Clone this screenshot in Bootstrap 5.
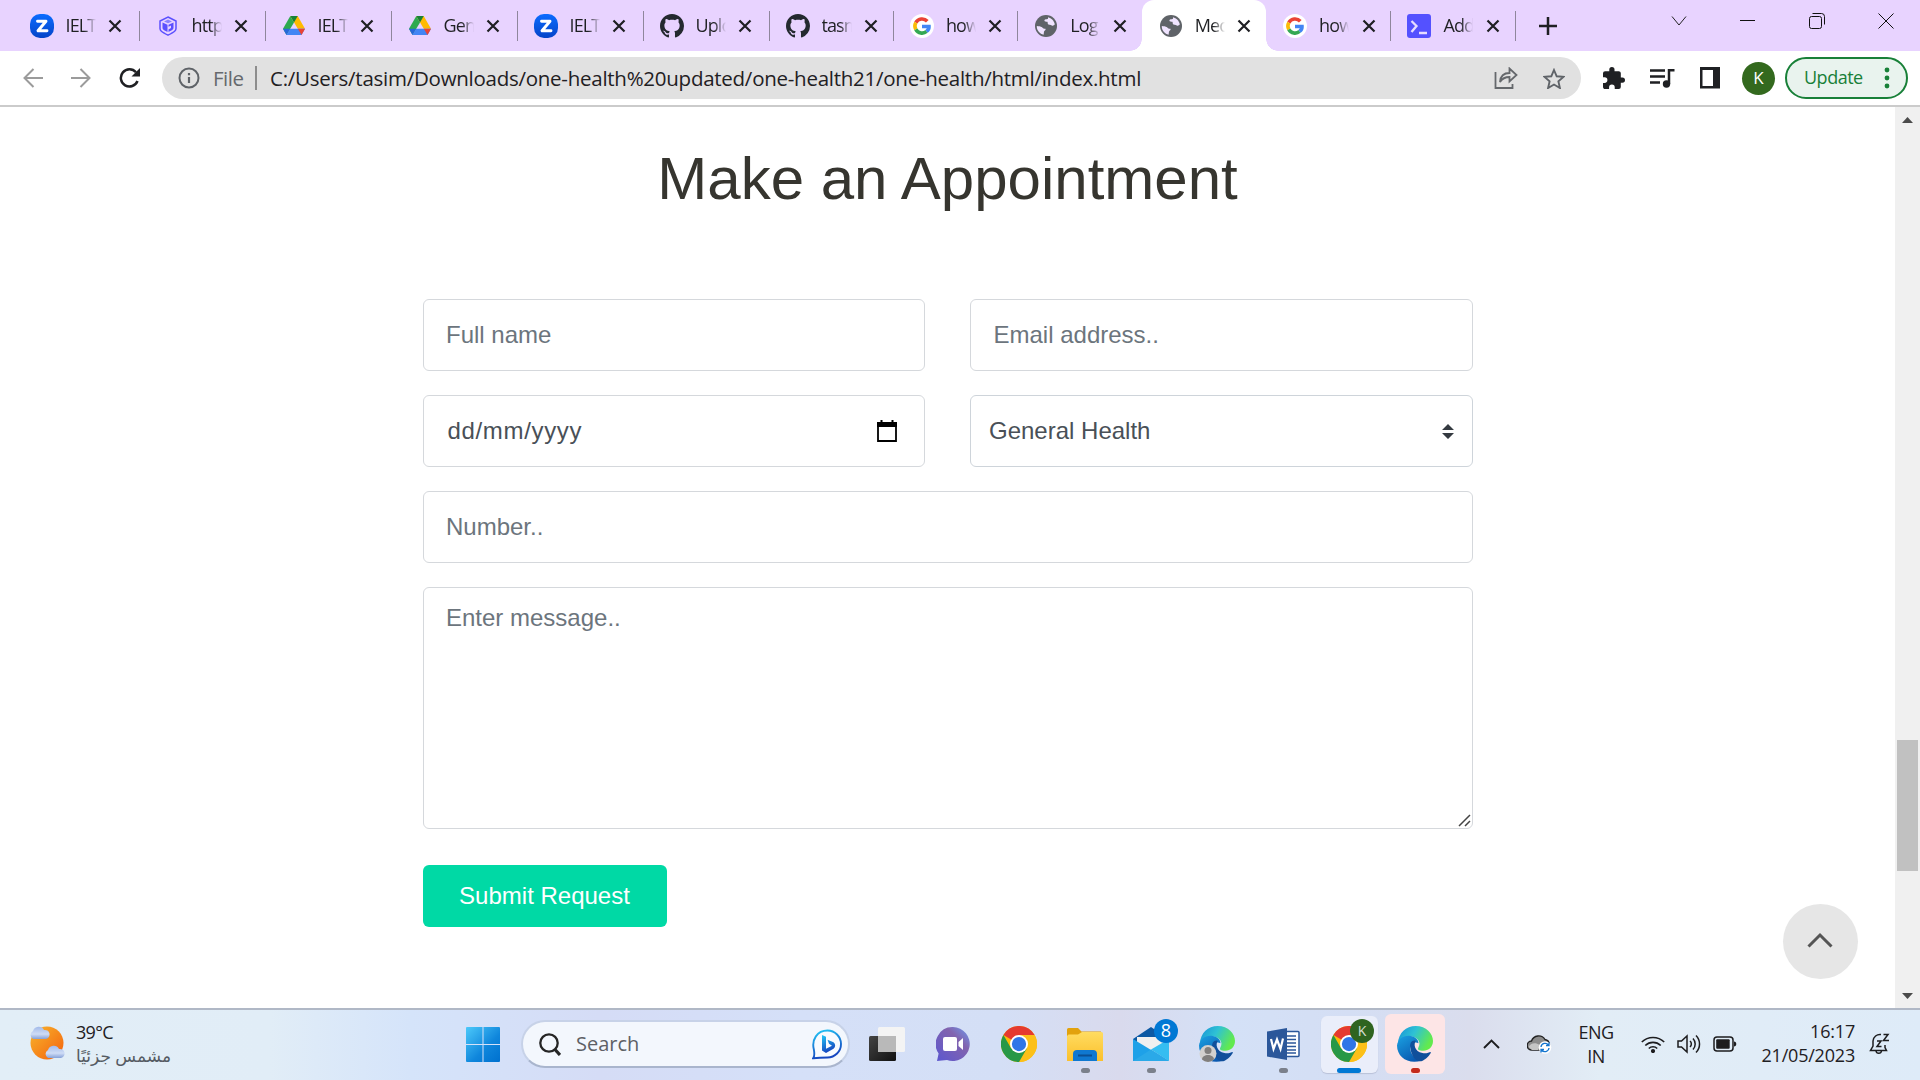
<!DOCTYPE html>
<html lang="en">
<head>
<meta charset="utf-8">
<title>Medical - Make an Appointment</title>
<link href="https://cdn.jsdelivr.net/npm/bootstrap@5.3.0/dist/css/bootstrap.min.css" rel="stylesheet">
<style>
body{width:1920px;height:1080px;overflow:hidden;font-family:"Open Sans","Noto Sans","DejaVu Sans",sans-serif;color:#1f2023;background:#fff;line-height:1.2}
svg{display:block;flex:none}
.tabstrip{height:51px;background:#e8d3ff;padding-left:12.5px}
.tab{width:126px;height:51px;padding-left:17px;position:relative}
.tab.narrow{width:124.4px}
.tab::after{content:"";position:absolute;right:-1px;top:11px;width:1px;height:30px;background:#8f869c}
.tab.plain::after{display:none}
.tab-title{width:30px;margin-left:12px;font-size:18px;letter-spacing:-.9px;white-space:nowrap;overflow:hidden;-webkit-mask-image:linear-gradient(90deg,#000 60%,transparent);mask-image:linear-gradient(90deg,#000 60%,transparent)}
.tab-x{margin-left:12.500px}
.tab.current{background:#fff;border-radius:12px 12px 0 0}
.flare{position:absolute;bottom:0;width:12px;height:12px}
.flare-l{left:-12px;background:radial-gradient(circle at 0 0,transparent 11.5px,#fff 12px)}
.flare-r{right:-12px;background:radial-gradient(circle at 100% 0,transparent 11.5px,#fff 12px)}
.winbtn{width:69px;height:42px}
.toolbar{height:56px;border-bottom:2px solid #cbcbcb;background:#fff}
.navslot{width:48px}
.omni{width:1419px;height:42px;border-radius:21px;background:#e1e1e1;padding-left:16px;font-size:20.5px}
.omni-file{color:#66696d;margin-left:13px;width:42px;letter-spacing:-.5px}
.omni-div{width:2px;height:24px;background:#8d8d8d;margin-right:13px}
.omni-url{white-space:nowrap;letter-spacing:-.26px;padding-top:1px}
.avatar{width:33px;height:33px;background:#33691e;color:#fff;font-size:17px}
.update{width:123px;height:42px;border:2px solid #188038;border-radius:21px;background:#e9f3ee;color:#188038;font-size:18px;padding-left:17px}
.update-label{width:60px;letter-spacing:-.5px}
.viewport{height:901px;font-family:"Liberation Sans",Arial,sans-serif}
.pagearea{width:1895px;height:901px;position:relative}
.scroller{width:25px;background:#f0f0f0}
.thumb{width:21px;height:131px;background:#c1c1c1;margin:609px 2px 0}
.headline{font-size:60px;line-height:72px;color:#36352f;padding-top:36px;margin-bottom:84px}
.appt{width:1050px;margin:0 auto;font-size:24px}
.appt-grid{--bs-gutter-x:45px;--bs-gutter-y:24px}
.field,.form-select.field{height:72px;font-size:24px;line-height:36px;padding:17px 22px 17px 22.5px;border:1px solid #d5d8dc;border-radius:6px;color:#495057;background-color:#fff}
.field::placeholder{color:#6c757d;opacity:1}
.form-select.field{padding-left:18px;border-color:#ced4da;background-image:url("data:image/svg+xml,%3csvg xmlns='http://www.w3.org/2000/svg' viewBox='0 0 4 5'%3e%3cpath fill='%23343a40' d='M2 0L0 2h4zm0 5L0 3h4z'/%3e%3c/svg%3e");background-size:12px 15px;background-position:right 18px center}
.datefield.field{padding-left:24px;padding-right:27px;letter-spacing:.66px}
textarea.field{height:242px;resize:none;padding-top:12px}
.grip{position:absolute;right:2px;bottom:2px}
.submit{height:62px;width:244px;margin-top:36px;background:#00d9a5;border:0;border-radius:6px;color:#fff;font-size:24px;padding:0}
.totop{position:absolute;left:1783px;top:797px;width:75px;height:75px;background:#e6e6e6;border:0;padding:0 1px 3px 0}
.taskbar{height:72px;border-top:2px solid #b0b8c6;background:linear-gradient(90deg,#e2eef7 0,#e1edf7 270px,#d5e4fa 410px,#d5dcf6 600px,#d5e0f8 800px,#d4dff6 1000px,#d9daed 1120px,#d4e1f7 1230px,#d4def4 1350px,#dadded 1470px,#e2edf6 1600px,#deebf8 1920px);padding-bottom:2px}
.weather{width:466px;padding-left:28px}
.weather-text{margin-left:10px;font-size:18px;line-height:24px;letter-spacing:-.7px;padding-bottom:1px}
.weather-text div+div{color:#555b63;font-size:17px;letter-spacing:0}
.searchbox{width:329px;height:48px;margin:0 4px 0 21px;border:2px solid #c7d2e8;border-bottom-color:#a9b5cd;border-radius:24px;background:#f3f7fd;padding:0 5px 0 16px;font-size:20px;color:#5d6065}
.slot{width:66px;height:70px;position:relative}
.dot{position:absolute;bottom:6px;height:5px;width:9px;border-radius:3px;background:#7b808b}
.tile{width:57px;height:57px;border-radius:6px;background:#eaeefa;box-shadow:0 1px 1px #b9c1d8}
.tile.alert-tile{width:60px;height:60px;background:#fde5e6;box-shadow:none}
.count{position:absolute;background:#0078d4;color:#fff;width:24px;height:24px;font-size:18px;left:36px;top:10px}
.kbadge{position:absolute;background:#2f6420;color:#d6dfd3;width:24px;height:24px;font-size:14px;left:34px;top:10px}
.tray{font-size:18px;line-height:24px;letter-spacing:-.55px}
</style>
<script src="https://cdn.jsdelivr.net/npm/bootstrap@5.3.0/dist/js/bootstrap.bundle.min.js"></script>
</head>
<body>
<svg width="0" height="0" class="position-absolute">
<defs>
<linearGradient id="gz" x2="0" y2="1"><stop stop-color="#0b6cff"/><stop offset="1" stop-color="#0544c8"/></linearGradient>
<linearGradient id="gsun" x2="1" y2="1"><stop stop-color="#f8b62d"/><stop offset="1" stop-color="#f4600c"/></linearGradient>
<linearGradient id="gcl" x2="0" y2="1"><stop stop-color="#a3bbea"/><stop offset=".6" stop-color="#cfdcf6"/><stop offset="1" stop-color="#86a1d8"/></linearGradient>
<linearGradient id="gwin" x1="0" y1="0" x2="34" y2="34" gradientUnits="userSpaceOnUse"><stop stop-color="#4cc9fa"/><stop offset=".6" stop-color="#0f86dc"/><stop offset="1" stop-color="#0071cf"/></linearGradient>
<linearGradient id="gtm" x1="1" x2="0" y2="1"><stop stop-color="#6d9cf0"/><stop offset=".35" stop-color="#8263ae"/><stop offset="1" stop-color="#5b57d0"/></linearGradient>
<linearGradient id="gfo" x2="0" y2="1"><stop stop-color="#ffdc61"/><stop offset="1" stop-color="#fbc02c"/></linearGradient>
<linearGradient id="ge1" x1="0" x2="1" y2=".4"><stop stop-color="#158fd8"/><stop offset=".5" stop-color="#2fc2d4"/><stop offset="1" stop-color="#62ea4e"/></linearGradient>
<linearGradient id="ge2" x2=".6" y2="1"><stop stop-color="#1aa1e2"/><stop offset="1" stop-color="#0a59b0"/></linearGradient>
<linearGradient id="gbing" x2=".3" y2="1"><stop stop-color="#21c8f6"/><stop offset="1" stop-color="#1546c0"/></linearGradient>
<linearGradient id="gblk" x2="1" y2="1"><stop stop-color="#444"/><stop offset="1" stop-color="#111"/></linearGradient>
<symbol id="zoomi" viewBox="0 0 24 24"><rect width="24" height="24" rx="10" fill="url(#gz)"/><path d="M7.500 7.200h8.500L8 16.800h9" fill="none" stroke="#fff" stroke-width="2.900" stroke-linejoin="round" stroke-linecap="round"/></symbol>
<symbol id="hex" viewBox="0 0 24 24"><path d="M12 3l8 4v7.500c0 2-1 3-8 6.700-7-3.700-8-4.700-8-6.700V7z" fill="none" stroke="#5b50ff" stroke-width="1.500"/><path d="M6.500 8.500l5 2.200V18c-4-2-5-2.700-5-4.500zM17.500 8.500V13.500c0 1.800-1 2.500-5 4.500v-2.500l2.500-1.400v-2.700l-2.500 1.300v-2z" fill="#5b50ff"/><path d="M8 7.500l4-2 4 2-4 1.700z" fill="#8a80ff"/></symbol>
<symbol id="drive" viewBox="0 0 24 24"><path d="M8.300 2L1 14.800 4.500 21 12 8.500z" fill="#2da94f"/><path d="M8.300 2h7.400L23 14.800h-7.200z" fill="#ffba00"/><path d="M8.300 2h7.400L12 8.500z" fill="#188038"/><path d="M4.500 21l3.600-6.200H23L19.500 21z" fill="#4285f4"/><path d="M15.800 14.800H23L19.500 21z" fill="#ea4335"/><path d="M1 14.800h7.100L4.500 21z" fill="#2767d9"/></symbol>
<symbol id="gh" viewBox="0 0 16 16"><path fill="#24292f" d="M8 0C3.580 0 0 3.580 0 8c0 3.540 2.290 6.530 5.470 7.590.4.070.55-.17.55-.38 0-.19-.01-.82-.01-1.490-2.010.37-2.530-.49-2.690-.94-.09-.23-.48-.94-.82-1.130-.28-.15-.68-.52-.01-.53.63-.01 1.080.58 1.230.82.720 1.210 1.870.87 2.330.66.070-.52.28-.87.51-1.070-1.780-.2-3.640-.89-3.640-3.950 0-.87.31-1.590.82-2.150-.08-.2-.36-1.020.08-2.120 0 0 .67-.21 2.200.82.64-.18 1.320-.27 2-.27s1.360.09 2 .27c1.530-1.040 2.200-.82 2.200-.82.440 1.100.160 1.920.080 2.120.51.560.82 1.270.82 2.150 0 3.070-1.870 3.750-3.650 3.950.290.250.540.730.540 1.480 0 1.070-.01 1.930-.01 2.200 0 .21.150.46.550.38A8.010 8.010 0 0 0 16 8c0-4.420-3.580-8-8-8z"/></symbol>
<symbol id="goog" viewBox="0 0 24 24"><circle cx="12" cy="12" r="12" fill="#fff"/><g fill="none" stroke-width="3.600"><path d="M17.300 7.300A7.100 7.100 0 0 0 5.800 8.600" stroke="#ea4335"/><path d="M5.800 8.600a7.100 7.100 0 0 0 0 6.800" stroke="#fbbc05"/><path d="M5.800 15.400a7.100 7.100 0 0 0 10.800 2" stroke="#34a853"/><path d="M16.600 17.400c1.700-1.400 2.500-3.300 2.400-4.900H12" stroke="#4285f4"/></g></symbol>
<symbol id="globe" viewBox="0 0 24 24"><circle cx="12" cy="12" r="11" fill="#5f6368"/><path d="M2.800 12c2 .3 3.700.2 5.300 1.300.8 1.500 1.800 1.300 3.400 1.500.5 1.500-.8 1.800-1.500 2.600l-.4 3.400C6 20 2.600 16.500 2.800 12zM14 3.300c3.500.8 6.200 3.700 6.800 7-1 1.500-2 1.700-3 1.200-1.500-.7-2.800-.2-3.800-1.400-.8-1.200.1-1.900-.7-2.300-1.300-.2-2.800.2-2.900-1.200.1-1.700 2.200-1 3.600-1.800z" fill="#f0e4ff"/></symbol>
<symbol id="term" viewBox="0 0 24 24"><rect width="24" height="24" rx="3" fill="#5451ff"/><path d="M4.500 7l5 5-5 6M12 19h8" fill="none" stroke="#e6dcff" stroke-width="2.300"/></symbol>
<symbol id="x" viewBox="0 0 14 14"><path d="M1.500 1.500l11 11m0-11l-11 11" stroke="#1f1f23" stroke-width="2.200"/></symbol>
<symbol id="chrome" viewBox="0 0 48 48"><circle cx="24" cy="24" r="24" fill="#fbbc05"/><path d="M24 24L3.200 12A24 24 0 0 1 44.800 12z" fill="#e53a30"/><path d="M24 12h20.800A24 24 0 0 1 24 48l10.400-18z" fill="#fcc018"/><path d="M3.200 12A24 24 0 0 0 24 48l10.400-18H13.600z" fill="#279847"/><circle cx="24" cy="24" r="12" fill="#fff"/><circle cx="24" cy="24" r="9.500" fill="#2f75e8"/></symbol>
<symbol id="edge" viewBox="0 0 48 48"><path d="M1 24C2 9 12 0 25 0c14 0 23 10 23 20 0 8-6 13-13 13-6 0-8-2-6.500-4.500C33 22 27 14 18 14 9 14 3 18 1 24z" fill="url(#ge1)"/><path d="M0 26C1 17 9 12 17 13c8 1 12 6 11.500 10C24 20 17 24 18 32c1 7 8 13 15 14C16 52 0 42 0 26z" fill="url(#ge2)"/><path d="M18 30c-2-8 3-12 7-10-3 4-2 14 9 16 5 1 9-1 10.500-1.500 1.500 0 0 3-3 6C36 46 33 47 30 47c-6-1-11-8-12-17z" fill="#104f9b"/></symbol>
</defs>
</svg>

<header>
<nav class="tabstrip d-flex align-items-center" aria-label="Tabs">
<div class="tab d-flex align-items-center"><svg width="24" height="24"><use href="#zoomi"/></svg><span class="tab-title">IELT</span><svg class="tab-x" width="14" height="14"><use href="#x"/></svg></div>
<div class="tab d-flex align-items-center"><svg width="24" height="24"><use href="#hex"/></svg><span class="tab-title">http</span><svg class="tab-x" width="14" height="14"><use href="#x"/></svg></div>
<div class="tab d-flex align-items-center"><svg width="24" height="24"><use href="#drive"/></svg><span class="tab-title">IELT</span><svg class="tab-x" width="14" height="14"><use href="#x"/></svg></div>
<div class="tab d-flex align-items-center"><svg width="24" height="24"><use href="#drive"/></svg><span class="tab-title">Gen</span><svg class="tab-x" width="14" height="14"><use href="#x"/></svg></div>
<div class="tab d-flex align-items-center"><svg width="24" height="24"><use href="#zoomi"/></svg><span class="tab-title">IELT</span><svg class="tab-x" width="14" height="14"><use href="#x"/></svg></div>
<div class="tab d-flex align-items-center"><svg width="24" height="24"><use href="#gh"/></svg><span class="tab-title">Uplo</span><svg class="tab-x" width="14" height="14"><use href="#x"/></svg></div>
<div class="tab narrow d-flex align-items-center"><svg width="24" height="24"><use href="#gh"/></svg><span class="tab-title">tasm</span><svg class="tab-x" width="14" height="14"><use href="#x"/></svg></div>
<div class="tab narrow d-flex align-items-center"><svg width="24" height="24"><use href="#goog"/></svg><span class="tab-title">how</span><svg class="tab-x" width="14" height="14"><use href="#x"/></svg></div>
<div class="tab narrow plain d-flex align-items-center"><svg width="24" height="24"><use href="#globe"/></svg><span class="tab-title">Log</span><svg class="tab-x" width="14" height="14"><use href="#x"/></svg></div>
<div class="tab narrow plain current d-flex align-items-center"><i class="flare flare-l"></i><svg width="24" height="24"><use href="#globe"/></svg><span class="tab-title">Med</span><svg class="tab-x" width="14" height="14"><use href="#x"/></svg><i class="flare flare-r"></i></div>
<div class="tab narrow d-flex align-items-center"><svg width="24" height="24"><use href="#goog"/></svg><span class="tab-title">how</span><svg class="tab-x" width="14" height="14"><use href="#x"/></svg></div>
<div class="tab narrow d-flex align-items-center"><svg width="24" height="24"><use href="#term"/></svg><span class="tab-title">Add</span><svg class="tab-x" width="14" height="14"><use href="#x"/></svg></div>
<div class="d-flex justify-content-center" style="width:67px"><svg width="18" height="18"><path d="M9 0v18M0 9h18" stroke="#1f1f23" stroke-width="2.500"/></svg></div>
<div class="d-flex align-self-start ms-auto">
<div class="winbtn d-flex align-items-center justify-content-center"><svg width="16" height="10"><path d="M1 .5l7 8.500 7-8.500" fill="none" stroke="#222"/></svg></div>
<div class="winbtn d-flex align-items-center justify-content-center"><svg width="15" height="2"><path d="M0 .5h15" stroke="#111"/></svg></div>
<div class="winbtn d-flex align-items-center justify-content-center"><svg width="16" height="16" fill="none" stroke="#111"><rect x=".5" y="3.500" width="12" height="12" rx="2"/><path d="M3.500.5h9a3 3 0 0 1 3 3v8"/></svg></div>
<div class="winbtn d-flex align-items-center justify-content-center"><svg width="16" height="16"><path d="M.5.5l15 15m0-15l-15 15" stroke="#111"/></svg></div>
</div>
</nav>

<div class="toolbar d-flex align-items-center">
<div class="d-flex" style="padding-left:9px;width:162px">
<div class="navslot d-flex justify-content-center"><svg width="20" height="20" fill="none" stroke="#9b9b9b" stroke-width="2"><path d="M20 10H2M10.500 1L1.500 10l9 9"/></svg></div>
<div class="navslot d-flex justify-content-center"><svg width="20" height="20" fill="none" stroke="#9b9b9b" stroke-width="2"><path d="M0 10h18M9.500 1l9 9-9 9"/></svg></div>
<div class="navslot d-flex justify-content-center"><svg width="22" height="20" viewBox="-1 0 22 20"><path d="M18.500 13A8.600 8.600 0 1 1 17 4.300" fill="none" stroke="#1f2023" stroke-width="2.500"/><path d="M21 0v8.500h-8.500z" fill="#1f2023"/></svg></div>
</div>
<div class="omni d-flex align-items-center">
<svg width="22" height="22" viewBox="0 0 22 22"><circle cx="11" cy="11" r="9.500" fill="none" stroke="#5f6368" stroke-width="2"/><path d="M11 10v6M11 6v2.200" stroke="#5f6368" stroke-width="2.200"/></svg>
<span class="omni-file">File</span><span class="omni-div"></span><span class="omni-url">C:/Users/tasim/Downloads/one-health%20updated/one-health21/one-health/html/index.html</span>
<div class="d-flex align-items-center ms-auto" style="padding-right:16px;gap:25px">
<svg width="24" height="22" viewBox="0 0 24 22" fill="none" stroke="#65686c" stroke-width="1.800"><path d="M1.500 5v16h17v-4M6 15C6.500 9 10 6 15.500 6V1.500l7 6.500-7 6.500V10C11 10 8.500 11 6 15z"/></svg>
<svg width="22" height="21" viewBox="0 0 22 21"><path d="M11 2l2.700 6.300 6.700.6-5 4.500 1.500 6.600-5.900-3.500-5.900 3.500 1.500-6.600-5-4.500 6.700-.6z" fill="none" stroke="#5f6368" stroke-width="1.900"/></svg>
</div>
</div>
<div class="d-flex align-items-center">
<svg style="margin-left:22px" width="22" height="22" viewBox="2 1 21 21"><path fill="#1f2023" d="M20.500 11H19V7c0-1.100-.9-2-2-2h-4V3.500a2.500 2.500 0 0 0-5 0V5H4a2 2 0 0 0-2 2v3.800h1.500a2.700 2.700 0 0 1 0 5.400H2V20c0 1.100.9 2 2 2h3.800v-1.500a2.700 2.700 0 0 1 5.400 0V22H17a2 2 0 0 0 2-2v-4h1.500a2.500 2.500 0 0 0 0-5z"/></svg>
<svg style="margin-left:25px" width="25" height="20" viewBox="0 0 25 20"><path d="M0 2.500h15M0 8.500h15M0 14.500h10" stroke="#1f2023" stroke-width="2.500"/><circle cx="16.500" cy="16" r="3.700" fill="#1f2023"/><path d="M19 16V2.200h5.500" fill="none" stroke="#1f2023" stroke-width="2.500"/></svg>
<svg style="margin-left:24px" width="22" height="22" viewBox="0 0 22 22"><path fill-rule="evenodd" d="M1 0h20v21.500H1zM3.500 3v16H14V3z" fill="#1f2023"/></svg>
<div class="avatar rounded-circle d-flex align-items-center justify-content-center" style="margin-left:21px">K</div>
<div class="update d-flex align-items-center" style="margin-left:10px"><span class="update-label">Update</span><svg style="margin-left:20px" width="6" height="22"><g fill="#188038"><circle cx="3" cy="3" r="2.400"/><circle cx="3" cy="11" r="2.400"/><circle cx="3" cy="19" r="2.400"/></g></svg></div>
</div>
</div>
</header>

<main class="viewport d-flex">
<div class="pagearea">
<h1 class="headline text-center fw-normal">Make an Appointment</h1>
<form class="appt">
<div class="row appt-grid">
<div class="col-6"><input class="form-control field" placeholder="Full name"></div>
<div class="col-6"><input class="form-control field" placeholder="Email address.."></div>
<div class="col-6"><div class="form-control field datefield d-flex align-items-center justify-content-between"><span>dd/mm/yyyy</span><svg width="20" height="22" viewBox="0 0 20 22"><path d="M1 3h18v18H1z" fill="none" stroke="#000" stroke-width="1.800"/><path d="M0 2h20v5H0zM3.500 0h2v3h-2zM14.500 0h2v3h-2z"/></svg></div></div>
<div class="col-6"><select class="form-select field"><option>General Health</option></select></div>
<div class="col-12"><input class="form-control field" placeholder="Number.."></div>
<div class="col-12"><div class="position-relative"><textarea class="form-control field" placeholder="Enter message.."></textarea><svg class="grip" width="13" height="13"><path d="M1 12L12 1M7 12l5-5" stroke="#444" stroke-width="1.500"/></svg></div></div>
</div>
<button type="button" class="btn submit">Submit Request</button>
</form>
<button class="totop rounded-circle d-flex align-items-center justify-content-center"><svg width="26" height="17"><path d="M1.500 14.500L13 3l11.500 11.500" fill="none" stroke="#555" stroke-width="3"/></svg></button>
</div>
<div class="scroller d-flex flex-column align-items-center">
<svg width="25" height="24"><path d="M7 16l5.500-6 5.500 6z" fill="#4b4b4b"/></svg>
<div class="thumb"></div>
<svg class="mt-auto" width="25" height="24"><path d="M7 9l5.500 6 5.500-6z" fill="#4b4b4b"/></svg>
</div>
</main>

<footer class="taskbar d-flex align-items-center">
<div class="weather d-flex align-items-center">
<svg width="38" height="38" viewBox="0 0 38 38"><circle cx="19" cy="18" r="16.500" fill="url(#gsun)"/><path d="M5 14a4.500 4.500 0 0 1 0-8 6 6 0 0 1 11-1 4.600 4.600 0 0 1 2 9z" fill="url(#gcl)"/><path d="M20 33a4.500 4.500 0 0 1 0-8 6 6 0 0 1 11-1 4.600 4.600 0 0 1 2 9z" fill="url(#gcl)"/></svg>
<div class="weather-text"><div>39°C</div><div dir="rtl">مشمس جزئيًا</div></div>
</div>
<svg width="34" height="35" viewBox="0 0 34 35" fill="url(#gwin)"><path d="M1 0h15.500v17H0V1a1 1 0 0 1 1-1zM17.500 0H33a1 1 0 0 1 1 1v16H17.500zM0 18h16.500v17H1a1 1 0 0 1-1-1zM17.500 18H34v16a1 1 0 0 1-1 1H17.500z"/></svg>
<div class="searchbox d-flex align-items-center">
<svg width="22" height="23" viewBox="0 0 22 23" fill="none" stroke="#252525"><circle cx="10" cy="10" r="8.700" stroke-width="2.300"/><path d="M16 16.500l5 5.500" stroke-width="3.200"/></svg>
<span style="margin-left:15px">Search</span>
<svg class="ms-auto" width="31" height="31" viewBox="0 0 31 31"><path d="M1.200 29.200c1.800-2 1.300-5 .6-9C-.5 11 5 1.500 15.500 1.500a13.500 13.500 0 0 1 0 27c-5 0-8 0-14.300.7z" fill="#f8fbff" stroke="url(#gbing)" stroke-width="1.900"/><path d="M10 6l4 1.700v12l6-3-3-2-1.500-4 6 2.500a4 4 0 0 1 0 6.500L14 24l-4-2.500z" fill="url(#gbing)"/></svg>
</div>
<div class="slot d-flex align-items-center justify-content-center"><svg width="36" height="34"><rect y="9" width="27" height="25" rx="1.500" fill="url(#gblk)"/><rect x="9" width="27" height="25" rx="1.500" fill="#f4f4f4"/><path d="M9 9h18v16H9z" fill="#b9b9b9"/></svg></div>
<div class="slot d-flex align-items-center justify-content-center"><svg width="34" height="34" viewBox="0 0 34 34"><path d="M17 0a17 17 0 1 1-6 33l-10 1 1.600-7.500A17 17 0 0 1 17 0z" fill="url(#gtm)"/><rect x="7" y="10" width="14" height="14" rx="2" fill="#fff"/><path d="M22.500 15l4.500-4v12l-4.500-4z" fill="#fff"/></svg></div>
<div class="slot d-flex align-items-center justify-content-center"><svg width="36" height="36"><use href="#chrome"/></svg></div>
<div class="slot d-flex align-items-center justify-content-center"><svg width="36" height="33" viewBox="0 0 36 33"><path d="M0 1.500A1.500 1.500 0 0 1 1.500 0H11l3.500 3.500H34V12H0z" fill="#e2a20d"/><path d="M1.500 6.500H11L15 4h19.500A1.500 1.500 0 0 1 36 5.500V33H0V8z" fill="url(#gfo)"/><path d="M6 33v-7a4 4 0 0 1 4-4h16a4 4 0 0 1 4 4v7z" fill="#0f78d0"/><path d="M11 27.500h14" stroke="#0b4f93" stroke-width="2"/></svg><i class="dot"></i></div>
<div class="slot d-flex align-items-center justify-content-center"><svg width="36" height="34" viewBox="0 0 36 34"><path d="M0 12L18 0l18 12v8H0z" fill="#0c59a4"/><path d="M4 10h28v9l-14 9L4 18z" fill="#f0f0f0"/><path d="M0 12l23 14L36 34H0z" fill="#1ea1e8"/><path d="M36 12v22L18 22.500z" fill="#35bdf1"/><path d="M0 34l18-11.500L36 34z" fill="#2aa9e8"/></svg><span class="count rounded-circle d-flex align-items-center justify-content-center">8</span><i class="dot"></i></div>
<div class="slot d-flex align-items-center justify-content-center"><svg width="36" height="36" viewBox="0 0 36 36"><use href="#edge" width="36" height="36"/><circle cx="9" cy="27.500" r="8.500" fill="#d2d0ce"/><circle cx="9" cy="24.500" r="3.500" fill="#817f7d"/><path d="M3 33.500c0-6 12-6 12 0a8.500 8.500 0 0 1-12 0z" fill="#817f7d"/></svg></div>
<div class="slot d-flex align-items-center justify-content-center"><svg width="33" height="32" viewBox="0 0 33 32"><rect x="15" y="3.500" width="17" height="25" rx="1" fill="#fff" stroke="#2b579a" stroke-width="1.500"/><path d="M19 8h10M19 11.500h10M19 15h10M19 18.500h10M19 22h10M19 25h10" stroke="#2b579a" stroke-width="1.600"/><path d="M0 3.500L20 0v32L0 28.500z" fill="#2b579a"/><path d="M4 11l2.500 10L10 11.500 13.500 21 16 10.500" fill="none" stroke="#fff" stroke-width="2.200"/></svg><i class="dot"></i></div>
<div class="slot d-flex align-items-center justify-content-center"><div class="tile d-flex align-items-center justify-content-center"><svg width="36" height="36"><use href="#chrome"/></svg></div><span class="kbadge rounded-circle d-flex align-items-center justify-content-center">K</span><i class="dot" style="width:24px;background:#0078d4"></i></div>
<div class="slot d-flex align-items-center justify-content-center"><div class="tile alert-tile d-flex align-items-center justify-content-center"><svg width="36" height="36"><use href="#edge"/></svg></div><i class="dot" style="background:#c42b1c"></i></div>
<div class="tray d-flex align-items-center" style="margin-left:20px">
<div class="d-flex justify-content-center" style="width:46px"><svg width="17" height="10"><path d="M1 9l7.500-7.500L16 9" fill="none" stroke="#1d1d1f" stroke-width="1.900"/></svg></div>
<div class="d-flex justify-content-center" style="width:48px;padding-left:3px"><svg width="25" height="20" viewBox="0 0 25 20"><path d="M5 16a4.500 4.500 0 0 1-.5-9A7.500 7.500 0 0 1 18 5.500 5.500 5.500 0 0 1 19 16z" fill="#8c8c8c" stroke="#222" stroke-width="1.400"/><path d="M1.500 13c2-4 7-5 11-2l-1 5H5z" fill="#c5c5c5"/><circle cx="18" cy="13.500" r="6.300" fill="#fff"/><path d="M14 13a4.200 4.200 0 0 1 7.500-2M22 14a4.200 4.200 0 0 1-7.500 2M22 8.500V11.500h-3M14 18.500v-3h3" fill="none" stroke="#1375cf" stroke-width="1.300"/></svg></div>
<div class="text-center" style="width:68px">ENG<br>IN</div>
<div class="d-flex justify-content-center" style="width:36px;margin-left:5px"><svg width="24" height="18" viewBox="0 0 24 18" fill="none" stroke="#1d1d1f" stroke-width="1.600"><path d="M.8 7a16 16 0 0 1 22.400 0M4.300 10.500a11 11 0 0 1 15.400 0M7.800 13.500a6 6 0 0 1 8.400 0"/><circle cx="12" cy="16" r="1.300" fill="#1d1d1f"/></svg></div>
<div class="d-flex justify-content-center" style="width:36px"><svg width="24" height="20" viewBox="0 0 24 20" fill="none" stroke="#1d1d1f" stroke-width="1.500"><path d="M1 7h3.500L10 2v16l-5.500-5H1zM13 7a4 4 0 0 1 0 6M16 4.500a8 8 0 0 1 0 11M19 1.500a12 12 0 0 1 0 17"/></svg></div>
<div class="d-flex justify-content-center" style="width:36px"><svg width="24" height="16" viewBox="0 0 24 16"><rect x="1" y="1" width="19" height="14" rx="3" fill="none" stroke="#1d1d1f" stroke-width="1.500"/><rect x="3.200" y="3.200" width="13.500" height="9.600" rx="1" fill="#1d1d1f"/><path d="M21 5.500c3 0 3 5 0 5z" fill="#1d1d1f"/></svg></div>
<div class="text-end text-nowrap" style="width:112px;letter-spacing:-.2px;padding-bottom:2px">16:17<br>21/05/2023</div>
<div class="d-flex justify-content-center" style="width:48px"><svg width="21" height="22" viewBox="0 0 21 22" fill="none" stroke="#1d1d1f" stroke-width="1.500"><path d="M12 1.500A7 7 0 0 0 4 8v5l-2.500 4.500h16L16 14.500V12M7 18c.5 3 5 3 5.500 0M14.500 1.500H19l-4.500 6H20M8 8h4l-4 5.500h4.500"/></svg></div>
</div>
</footer>
</body>
</html>
